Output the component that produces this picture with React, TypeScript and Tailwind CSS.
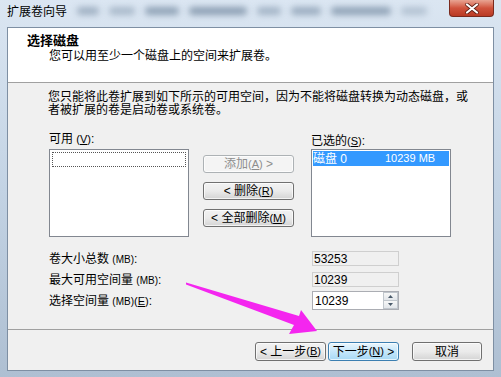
import React from 'react';

const font = 'font-["Liberation_Sans","Noto_Sans_CJK_SC",sans-serif]';

function Btn({ children, disabled, primary, className = '' }: { children: React.ReactNode; disabled?: boolean; primary?: boolean; className?: string }) {
  let look = 'border-[#707070] bg-gradient-to-b from-[#f2f2f2] via-[#ebebeb] to-[#d4d4d4] text-black';
  if (disabled) look = 'border-[#adb2b5] bg-[#f4f4f4] text-[#8d8d8d]';
  if (primary) look = 'border-[#3c7fb1] bg-gradient-to-b from-[#eaf6fd] via-[#c6e7fa] to-[#a7d9f5] text-black';
  return (
    <div className={`flex items-center justify-center rounded-[3px] border text-[12px] leading-none shadow-[inset_0_0_0_1px_rgba(255,255,255,0.7)] ${look} ${className}`}>
      {children}
    </div>
  );
}

function Mn({ k }: { k: string }) {
  return (
    <span className="text-[11px]">
      (<span className="underline">{k}</span>)
    </span>
  );
}

export default function App() {
  return (
    <div className={`relative w-[501px] h-[377px] overflow-hidden bg-gradient-to-b from-[#dbe6f2] via-[#c3d3e4] to-[#aebfd2] ${font}`}>
      {/* title bar */}
      <div className="flex h-[27px] items-start">
        <div className="pl-[7px] pt-[5px] text-[12px] leading-[14px] text-black">扩展卷向导</div>
        <div className="ml-[10px] mt-[7px] flex gap-[10px]">
          <div className="h-[8px] w-[22px] rounded bg-[#9fb0c2] blur-[3px]" />
          <div className="h-[8px] w-[26px] rounded bg-[#a9b9ca] blur-[3px]" />
          <div className="h-[8px] w-[34px] rounded bg-[#8fa2b6] blur-[3px]" />
          <div className="h-[8px] w-[58px] rounded bg-[#8c9fb3] blur-[3px]" />
          <div className="h-[8px] w-[24px] rounded bg-[#a3b4c6] blur-[3px]" />
          <div className="h-[8px] w-[30px] rounded bg-[#9aacbf] blur-[3px]" />
          <div className="h-[8px] w-[60px] rounded bg-[#8fa2b6] blur-[3px]" />
          <div className="h-[8px] w-[26px] rounded bg-[#b3c2d2] blur-[3px]" />
        </div>
        <div className="ml-auto mr-[7px] flex h-[17px] w-[45px] items-center justify-center rounded-b-[4px] border border-t-0 border-[#7a2a1e] bg-gradient-to-b from-[#e8a493] via-[#d0533d] to-[#b93a24]">
          <svg width="14" height="11" viewBox="0 0 14 11">
            <path d="M2 1.5 L12 9.5 M12 1.5 L2 9.5" stroke="#5a1c12" strokeWidth="3.6" strokeLinecap="round" />
            <path d="M2 1.5 L12 9.5 M12 1.5 L2 9.5" stroke="#ffffff" strokeWidth="2.2" strokeLinecap="round" />
          </svg>
        </div>
      </div>

      {/* dialog panel */}
      <div className="mx-[7px] flex h-[344px] flex-col border border-[#7e8fa3] bg-[#f0f0f0]">
        <div className="h-[55px] border-b border-[#a0a0a0] bg-white pl-[19px] pt-[5px]">
          <div className="text-[13px] font-bold leading-[15px] text-black">选择磁盘</div>
          <div className="ml-[22px] mt-[1px] text-[12px] leading-[14px] text-black">您可以用至少一个磁盘上的空间来扩展卷。</div>
        </div>

        <div className="h-[247px] border-b border-[#a0a0a0] pl-[40px] pt-[8px] text-[12px] text-black">
          <p className="leading-[13px]">
            您只能将此卷扩展到如下所示的可用空间，因为不能将磁盘转换为动态磁盘，或
            <br />
            者被扩展的卷是启动卷或系统卷。
          </p>

          <div className="mt-[15px] flex">
            <div className="w-[141px] pl-[1px]">
              <div className="leading-[14px]">可用 <Mn k="V" />:</div>
              <div className="mt-[3px] h-[88px] border border-[#828790] bg-white p-[2px]">
                <div className="h-[15px] border border-dotted border-[#555]" />
              </div>
            </div>
            <div className="ml-[14px] flex w-[91px] flex-col gap-[9px] pt-[23px]">
              <Btn disabled className="h-[18px]">添加<Mn k="A" />&nbsp;&gt;</Btn>
              <Btn className="h-[18px]">&lt; 删除<Mn k="R" /></Btn>
              <Btn className="h-[18px]">&lt; 全部删除<Mn k="M" /></Btn>
            </div>
            <div className="ml-[17px] w-[140px]">
              <div className="pt-[2px] leading-[14px]">已选的<Mn k="S" />:</div>
              <div className="mt-[1px] h-[88px] border border-[#828790] bg-white p-[1px]">
                <div className="flex h-[15px] items-center bg-[#3399ff] text-[12px] leading-none text-white">
                  <span className="w-[72px]">磁盘 0</span>
                  <span className="text-[11px]">10239 MB</span>
                </div>
              </div>
            </div>
          </div>

          <div className="mt-[14px] flex flex-col">
            <div className="flex h-[15px] items-center">
              <div className="w-[264px] pl-[1px]">卷大小总数 <span className="text-[10px]">(MB)</span>:</div>
              <div className="flex h-[15px] w-[87px] items-center border border-[#cfcfcf] bg-[#f0f0f0] pl-[1px] text-[12px] leading-none">53253</div>
            </div>
            <div className="mt-[6px] flex h-[15px] items-center">
              <div className="w-[264px] pl-[1px]">最大可用空间量 <span className="text-[10px]">(MB)</span>:</div>
              <div className="flex h-[15px] w-[87px] items-center border border-[#cfcfcf] bg-[#f0f0f0] pl-[1px] text-[12px] leading-none">10239</div>
            </div>
            <div className="mt-[4px] flex h-[19px] items-center">
              <div className="w-[264px] pl-[1px]">选择空间量 <span className="text-[10px]">(MB)</span><Mn k="E" />:</div>
              <div className="flex h-[19px] w-[87px] border border-[#abadb3] bg-white">
                <div className="flex flex-1 items-center pl-[2px] text-[12px] leading-none">10239</div>
                <div className="flex w-[15px] flex-col">
                  <div className="flex flex-1 items-center justify-center border border-[#c0c6cc] bg-gradient-to-b from-[#f7f7f7] to-[#e2e6ea]">
                    <svg width="5" height="3" viewBox="0 0 5 3"><path d="M0 3 L2.5 0 L5 3 Z" fill="#4a5a6a" /></svg>
                  </div>
                  <div className="flex flex-1 items-center justify-center border border-t-0 border-[#c0c6cc] bg-gradient-to-b from-[#f7f7f7] to-[#e2e6ea]">
                    <svg width="5" height="3" viewBox="0 0 5 3"><path d="M0 0 L2.5 3 L5 0 Z" fill="#4a5a6a" /></svg>
                  </div>
                </div>
              </div>
            </div>
          </div>
        </div>

        <div className="flex flex-1 items-start justify-end pr-[11px] pt-[12px]">
          <Btn className="h-[19px] w-[71px]">&lt; 上一步<Mn k="B" /></Btn>
          <Btn primary className="ml-[2px] h-[19px] w-[71px]">下一步<Mn k="N" />&nbsp;&gt;</Btn>
          <Btn className="ml-[13px] h-[19px] w-[70px]">取消</Btn>
        </div>
      </div>

      {/* annotation arrow */}
      <svg className="pointer-events-none absolute left-0 top-0" width="501" height="377" viewBox="0 0 501 377">
        <polygon points="186,282.5 299,316 301,310 317,331 289,334 294,325 186,284.5" fill="#f426ef" />
      </svg>
    </div>
  );
}
